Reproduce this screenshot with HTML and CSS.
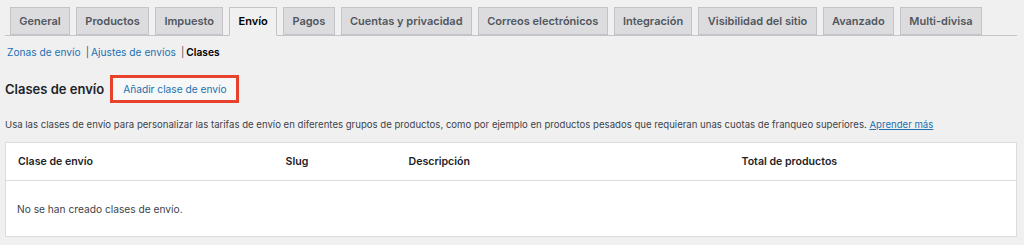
FILE: index.html
```html
<!DOCTYPE html>
<html lang="es">

<head>
    <meta charset="UTF-8">
    <meta name="viewport" content="width=device-width, initial-scale=1.0">
    <title>Ajustes de envío - Clases</title>
    <link rel="stylesheet" href="styles.css">
</head>

<body>
    <div class="wrap">
        <nav class="nav-tabs">
            <a class="nav-tab" href="#">General</a>
            <a class="nav-tab" href="#">Productos</a>
            <a class="nav-tab" href="#">Impuesto</a>
            <a class="nav-tab nav-tab-active" href="#">Envío</a>
            <a class="nav-tab" href="#">Pagos</a>
            <a class="nav-tab" href="#">Cuentas y privacidad</a>
            <a class="nav-tab" href="#">Correos electrónicos</a>
            <a class="nav-tab" href="#">Integración</a>
            <a class="nav-tab" href="#">Visibilidad del sitio</a>
            <a class="nav-tab" href="#">Avanzado</a>
            <a class="nav-tab" href="#">Multi-divisa</a>
        </nav>

        <ul class="subsubsub">
            <li><a href="#">Zonas de envío</a><span class="sep">|</span></li>
            <li><a href="#">Ajustes de envíos</a><span class="sep">|</span></li>
            <li><a class="current" href="#">Clases</a></li>
        </ul>

        <div class="title-row">
            <h2>Clases de envío</h2>
            <a class="page-title-action" href="#">Añadir clase de envío</a>
        </div>

        <p class="desc">Usa las clases de envío para personalizar las tarifas de envío en diferentes grupos de productos, como por ejemplo en productos pesados que requieran unas cuotas de franqueo superiores. <a href="#">Aprender más</a></p>

        <table class="classes">
            <colgroup>
                <col class="c-name">
                <col class="c-slug">
                <col class="c-desc">
                <col>
            </colgroup>
            <thead>
                <tr>
                    <th>Clase de envío</th>
                    <th>Slug</th>
                    <th>Descripción</th>
                    <th>Total de productos</th>
                </tr>
            </thead>
            <tbody>
                <tr>
                    <td colspan="4">No se han creado clases de envío.</td>
                </tr>
            </tbody>
        </table>
    </div>
</body>

</html>
```

FILE: styles.css
```css
* {
    box-sizing: border-box;
}

html,
body {
    margin: 0;
    padding: 0;
    background: #f0f0f1;
}

body {
    font-family: Inter, "Liberation Sans", Arial, sans-serif;
    color: #3c434a;
    font-size: 10.2px;
}

a {
    color: #2271b1;
    text-decoration: none;
}

.wrap {
    width: 1017px;
    padding: 7px 0 0 5px;
}

/* tabs */
.nav-tabs {
    display: flex;
    gap: 6px;
    padding-left: 5px;
    border-bottom: 1px solid #c3c4c7;
    height: 29px;
}

.nav-tab {
    display: block;
    height: 28px;
    line-height: 26px;
    padding: 0 8.3px;
    border: 1px solid #c3c4c7;
    background: #dcdcde;
    color: #50575e;
    font-weight: 600;
    font-size: 11px;
}

.nav-tab-active {
    background: #f0f0f1;
    border-bottom-color: #f0f0f1;
    height: 29px;
    color: #000;
}

/* sub links */
.subsubsub {
    list-style: none;
    margin: 0;
    padding: 0 0 0 2px;
    display: flex;
    height: 31px;
    align-items: center;
    font-size: 10.2px;
}

.subsubsub li {
    display: flex;
}

.subsubsub .sep {
    color: #50575e;
    margin: 0 2px 0 5px;
}

.subsubsub .current {
    color: #000;
    font-weight: 600;
}

/* title */
.title-row {
    display: flex;
    align-items: center;
    margin-top: 8px;
}

.title-row h2 {
    margin: 0;
    font-size: 13px;
    font-weight: 600;
    color: #1d2327;
}

.page-title-action {
    margin-left: 6px;
    height: 28px;
    line-height: 22px;
    padding: 0 9px 0 10px;
    border: 3px solid #e8412c;
    background: #f6f7f7;
    color: #2271b1;
    font-size: 10.2px;
}

.desc {
    margin: 15px 0 0;
    font-size: 9.6px;
    line-height: 14px;
    color: #3c434a;
    white-space: nowrap;
}

.desc a {
    text-decoration: underline;
}

/* table */
.classes {
    width: 1012px;
    margin-top: 10px;
    border-collapse: collapse;
    table-layout: fixed;
    background: #fff;
    border: 1px solid #dcdcde;
}

.c-name {
    width: 268px;
}

.c-slug {
    width: 123px;
}

.c-desc {
    width: 333px;
}

.classes th {
    text-align: left;
    font-weight: 600;
    color: #1d2327;
    font-size: 10.6px;
    height: 38px;
    padding: 0 12px;
    border-bottom: 1px solid #dcdcde;
}

.classes td {
    height: 56px;
    padding: 0 11px;
    color: #3c434a;
    font-size: 10.2px;
}
```
